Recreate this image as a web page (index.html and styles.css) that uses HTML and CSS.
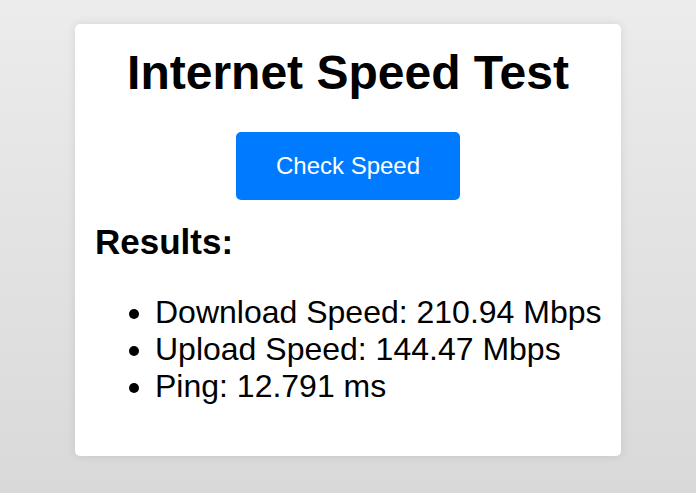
FILE: index.html
```html
<!DOCTYPE html>
<html lang="en">
<head>
    <meta charset="UTF-8">
    <meta name="viewport" content="width=device-width, initial-scale=1.0">
    <title>Internet Speed Test</title>
    <link rel="stylesheet" href="styles.css">
</head>
<body>
    <!-- Speed Test Card -->
    <div class="container">
        <h1>Internet Speed Test</h1>
        <div class="actions">
            <button id="check-speed">Check Speed</button>
        </div>

        <!-- Results -->
        <h2>Results:</h2>
        <ul class="results">
            <li>Download Speed: 210.94 Mbps</li>
            <li>Upload Speed: 144.47 Mbps</li>
            <li>Ping: 12.791 ms</li>
        </ul>
    </div>
</body>
</html>
```

FILE: styles.css
```css
/* General Styles */
html {
    min-height: 100%;
    background: linear-gradient(to bottom, #ececec, #d9d9d9);
}
body {
    margin: 0;
    padding: 24px 0;
    font-family: "Liberation Sans", Arial, Helvetica, sans-serif;
    color: #000;
}

/* Card */
.container {
    box-sizing: border-box;
    width: 546px;
    margin: 0 auto;
    padding: 21px 20px 19px;
    background: #fff;
    border-radius: 5px;
    box-shadow: 0 0 10px rgba(0, 0, 0, 0.1);
}
.container h1 {
    margin: 0 0 32px;
    font-size: 48px;
    text-align: center;
}
.actions {
    display: flex;
    justify-content: center;
}
#check-speed {
    padding: 20px 40px;
    font-family: inherit;
    font-size: 24px;
    color: #fff;
    background-color: #007bff;
    border: none;
    border-radius: 5px;
    cursor: pointer;
}

/* Results */
.container h2 {
    margin: 22px 0 0;
    font-size: 35px;
}
.results {
    margin: 32px 0;
    padding-left: 60px;
    font-size: 32px;
}
.results li {
    white-space: nowrap;
}
```
